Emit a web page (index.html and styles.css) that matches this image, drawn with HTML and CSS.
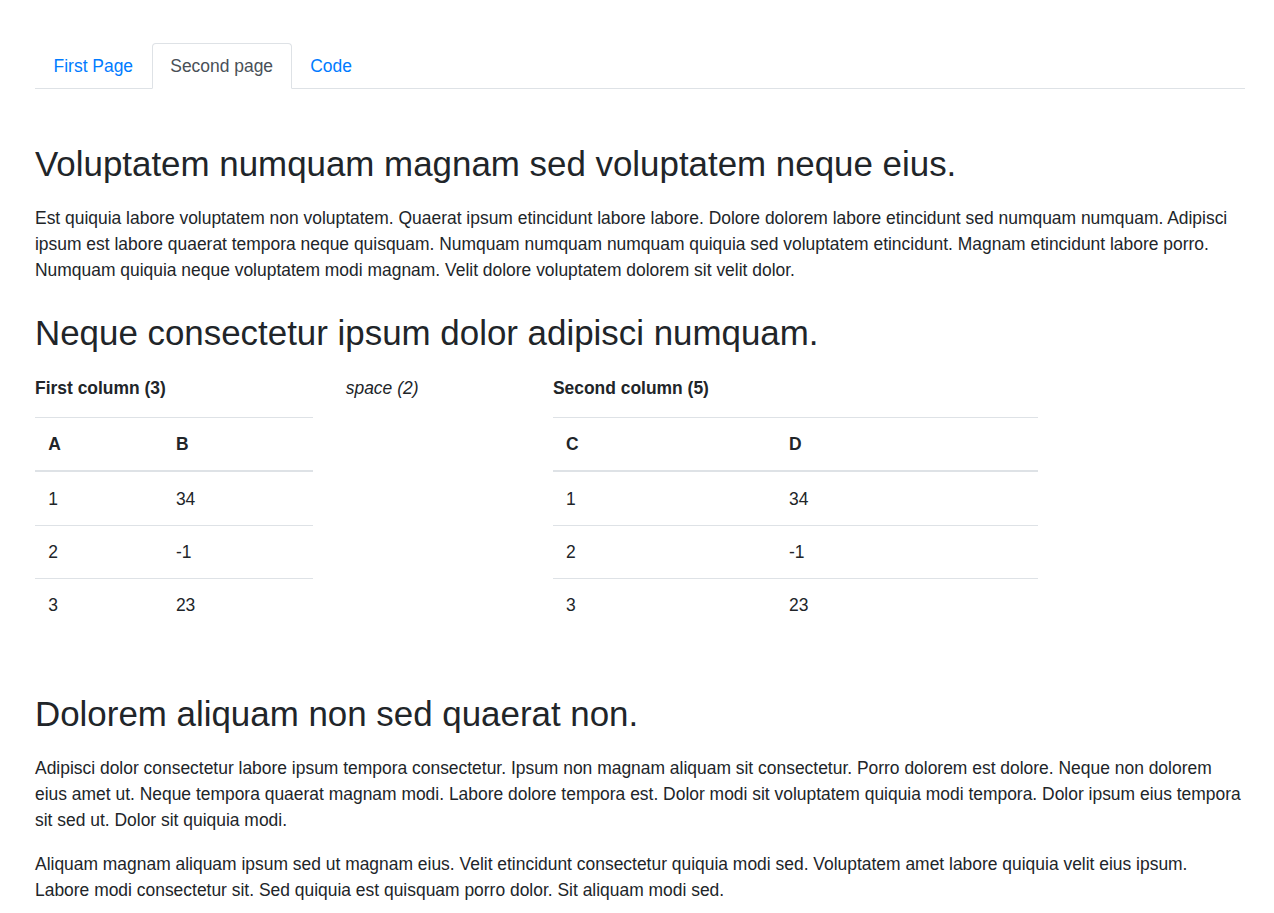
FILE: index.html
```html
<!DOCTYPE html>
<html>
<head>
<meta charset="utf-8">
<link rel="stylesheet" href="styles.css">
</head>
<body>
<div class="page">
  <ul class="tabs">
    <li><a class="tab" href="#">First Page</a></li>
    <li><a class="tab active" href="#">Second page</a></li>
    <li><a class="tab" href="#">Code</a></li>
  </ul>
  <div class="content">
    <h2>Voluptatem numquam magnam sed voluptatem neque eius.</h2>
    <p>Est quiquia labore voluptatem non voluptatem. Quaerat ipsum etincidunt labore labore. Dolore dolorem labore etincidunt sed numquam numquam. Adipisci ipsum est labore quaerat tempora neque quisquam. Numquam numquam numquam quiquia sed voluptatem etincidunt. Magnam etincidunt labore porro. Numquam quiquia neque voluptatem modi magnam. Velit dolore voluptatem dolorem sit velit dolor.</p>
    <h2>Neque consectetur ipsum dolor adipisci numquam.</h2>
    <div class="row">
      <div class="col col-3">
        <p class="col-title"><strong>First column (3)</strong></p>
        <table class="table">
          <thead><tr><th>A</th><th>B</th></tr></thead>
          <tbody>
            <tr><td>1</td><td>34</td></tr>
            <tr><td>2</td><td>-1</td></tr>
            <tr><td>3</td><td>23</td></tr>
          </tbody>
        </table>
      </div>
      <div class="col col-2">
        <p class="col-title"><em>space (2)</em></p>
      </div>
      <div class="col col-5">
        <p class="col-title"><strong>Second column (5)</strong></p>
        <table class="table">
          <thead><tr><th>C</th><th>D</th></tr></thead>
          <tbody>
            <tr><td>1</td><td>34</td></tr>
            <tr><td>2</td><td>-1</td></tr>
            <tr><td>3</td><td>23</td></tr>
          </tbody>
        </table>
      </div>
    </div>
    <h2 class="after-row">Dolorem aliquam non sed quaerat non.</h2>
    <p>Adipisci dolor consectetur labore ipsum tempora consectetur. Ipsum non magnam aliquam sit consectetur. Porro dolorem est dolore. Neque non dolorem eius amet ut. Neque tempora quaerat magnam modi. Labore dolore tempora est. Dolor modi sit voluptatem quiquia modi tempora. Dolor ipsum eius tempora sit sed ut. Dolor sit quiquia modi.</p>
    <p>Aliquam magnam aliquam ipsum sed ut magnam eius. Velit etincidunt consectetur quiquia modi sed. Voluptatem amet labore quiquia velit eius ipsum. Labore modi consectetur sit. Sed quiquia est quisquam porro dolor. Sit aliquam modi sed.</p>
  </div>
</div>
</body>
</html>
```

FILE: styles.css
```css
html {
  font-size: 17.45px;
}
body {
  margin: 0;
  font-family: "Liberation Sans", Arial, sans-serif;
  font-size: 1rem;
  line-height: 26.2px;
  color: #212529;
  background: #fff;
}
.page {
  padding: 43px 29px 0 35px;
}
.tabs {
  display: flex;
  list-style: none;
  margin: 0;
  padding: 0;
  border-bottom: 1px solid #dee2e6;
}
.tabs li {
  margin-bottom: -1px;
}
.tab {
  display: block;
  padding: 8.8px 17.6px;
  border: 1px solid transparent;
  border-top-left-radius: 4px;
  border-top-right-radius: 4px;
  color: #007bff;
  text-decoration: none;
}
.tab.active {
  color: #495057;
  background: #fff;
  border-color: #dee2e6 #dee2e6 #fff;
}
.content {
  padding-top: 26px;
}
h2 {
  font-size: 2rem;
  font-weight: 500;
  line-height: 1.2;
  margin: 28.5px 0 19.5px;
}
p {
  margin: 0 0 17.6px;
}
.col-title {
  padding-top: 2px;
  margin-bottom: 15.6px;
}
strong {
  font-weight: bold;
}
.row {
  display: flex;
  margin: 0 -16.5px;
}
.col {
  padding: 0 16.5px;
  box-sizing: border-box;
}
.col-3 { flex: 0 0 25%; max-width: 25%; }
.col-2 { flex: 0 0 16.6667%; max-width: 16.6667%; }
.col-5 { flex: 0 0 41.6667%; max-width: 41.6667%; }
.table {
  width: 100%;
  border-collapse: collapse;
  margin-bottom: 17.6px;
}
.table th,
.table td {
  padding: 13.2px;
  line-height: 26px;
  text-align: left;
  vertical-align: top;
  border-top: 1px solid #dee2e6;
}
.table thead th {
  vertical-align: bottom;
  border-bottom: 2px solid #dee2e6;
  font-weight: bold;
}
.after-row {
  margin-top: 43.5px;
  margin-bottom: 20.5px;
}
```
